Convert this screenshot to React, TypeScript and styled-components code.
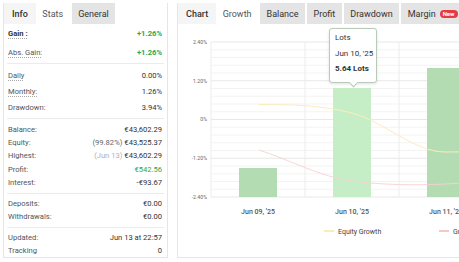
import React from "react";
import styled, { createGlobalStyle, css } from "styled-components";

const GlobalStyle = createGlobalStyle`
  html, body {
    margin: 0;
    padding: 0;
    background: #ffffff;
    overflow: hidden;
  }
  body {
    font-family: Roboto, "Liberation Sans", Arial, sans-serif;
    color: #333;
  }
`;

const Page = styled.div`
  display: flex;
  align-items: flex-start;
  gap: 9px;
  padding: 3px 0 0 3px;
  width: max-content;
`;

const Panel = styled.section<{ $width: number }>`
  width: ${(p) => p.$width}px;
  height: 255px;
  box-sizing: border-box;
  border: 1px solid #e6e6e6;
  border-top: none;
  display: flex;
  flex-direction: column;
  background: #fff;
`;

const TabBar = styled.div`
  display: flex;
  gap: 2px;
  height: 21px;
  flex: none;
  background: #fff;
`;

const Tab = styled.div<{ $kind: "label" | "active" | "idle" }>`
  display: flex;
  align-items: center;
  gap: 4px;
  padding: 0 ${(p) => (p.$kind === "label" ? 8 : 6.5)}px;
  font-size: 9px;
  color: #333;
  white-space: nowrap;
  ${(p) =>
    p.$kind === "label" &&
    css`
      background: #f5f5f5;
      font-weight: 500;
      margin-right: -2px;
    `}
  ${(p) =>
    p.$kind === "active" &&
    css`
      background: #fff;
      color: #555;
    `}
  ${(p) =>
    p.$kind === "idle" &&
    css`
      background: #e4e4e4;
    `}
`;

const NewBadge = styled.span`
  display: inline-block;
  background: #e53946;
  color: #fff;
  font-size: 6px;
  font-weight: 700;
  line-height: 8px;
  padding: 0 3px;
  border-radius: 4px;
`;

const Group = styled.div<{ $first?: boolean; $pt: number; $pb: number }>`
  padding: ${(p) => p.$pt}px 0 ${(p) => p.$pb}px;
  margin: 0 3px;
  ${(p) => !p.$first && css`border-top: 1px solid #ececec;`}
`;

const Row = styled.div<{ $h: number }>`
  height: ${(p) => p.$h}px;
  display: flex;
  align-items: center;
  justify-content: space-between;
  padding: 0 2px 0 1px;
  font-size: 7.6px;
`;

const Label = styled.span<{ $strong?: boolean; $dotted?: boolean }>`
  color: ${(p) => (p.$strong ? "#333" : "#555")};
  font-weight: ${(p) => (p.$strong ? 700 : 400)};
  ${(p) =>
    p.$dotted &&
    css`
      text-decoration: underline dotted #aaa;
      text-underline-offset: 2px;
    `}
`;

const Value = styled.span<{ $tone?: "green" | "greenBold" }>`
  color: ${(p) => (p.$tone ? "#2aa84a" : "#333")};
  font-weight: ${(p) => (p.$tone === "greenBold" ? 700 : 400)};
`;

const Note = styled.span<{ $light?: boolean }>`
  color: ${(p) => (p.$light ? "#b0b0b0" : "#666")};
  margin-right: 2px;
`;

const ChartArea = styled.div`
  position: relative;
  flex: 1;
`;

const ChartSvg = styled.svg`
  display: block;
  width: 100%;
  height: 100%;
`;

const Tooltip = styled.div`
  position: absolute;
  left: 151px;
  top: 4px;
  width: 48px;
  height: 55px;
  box-sizing: border-box;
  padding: 5px 0 0 5px;
  background: #fff;
  border: 1px solid #b8cbb8;
  border-radius: 3px;
  box-shadow: 0 1px 3px rgba(0, 0, 0, 0.12);
  font-size: 8px;
  color: #333;
  display: flex;
  flex-direction: column;
  gap: 7px;
  line-height: 8.5px;
  &::after {
    content: "";
    position: absolute;
    left: 20px;
    bottom: -4px;
    width: 6px;
    height: 6px;
    background: #fff;
    border-right: 1px solid #b8cbb8;
    border-bottom: 1px solid #b8cbb8;
    transform: rotate(45deg);
  }
`;

const TipStrong = styled.span`
  font-weight: 700;
`;

type StatRow = {
  label: string;
  value: React.ReactNode;
  strong?: boolean;
  dotted?: boolean;
  tone?: "green" | "greenBold";
};

const groups: { pt: number; pb: number; h: number; rows: StatRow[] }[] = [
  {
    pt: 0,
    pb: 1,
    h: 19,
    rows: [
      { label: "Gain :", value: "+1.26%", strong: true, dotted: true, tone: "greenBold" },
      { label: "Abs. Gain:", value: "+1.26%", dotted: true, tone: "greenBold" },
    ],
  },
  {
    pt: 3,
    pb: 3,
    h: 16,
    rows: [
      { label: "Daily", value: "0.00%", dotted: true },
      { label: "Monthly:", value: "1.26%", dotted: true },
      { label: "Drawdown:", value: "3.94%" },
    ],
  },
  {
    pt: 3.5,
    pb: 4,
    h: 13.3,
    rows: [
      { label: "Balance:", value: "€43,602.29" },
      {
        label: "Equity:",
        value: (
          <>
            <Note>(99.82%)</Note>€43,525.37
          </>
        ),
      },
      {
        label: "Highest:",
        value: (
          <>
            <Note $light>(Jun 13)</Note>€43,602.29
          </>
        ),
      },
      { label: "Profit:", value: "€542.56", tone: "green" },
      { label: "Interest:", value: "-€93.67" },
    ],
  },
  {
    pt: 3,
    pb: 4,
    h: 13,
    rows: [
      { label: "Deposits:", value: "€0.00" },
      { label: "Withdrawals:", value: "€0.00" },
    ],
  },
  {
    pt: 3,
    pb: 0,
    h: 13,
    rows: [
      { label: "Updated:", value: "Jun 13 at 22:57" },
      { label: "Tracking", value: "0" },
    ],
  },
];

const PLOT_TOP = 42;
const PLOT_BOTTOM = 197;
const PLOT_LEFT = 211;

function Chart() {
  const step = (PLOT_BOTTOM - PLOT_TOP) / 20;
  const hLines = Array.from({ length: 21 }, (_, i) => PLOT_TOP + i * step);
  const yLabels = [
    { t: "2.40%", y: PLOT_TOP },
    { t: "1.20%", y: PLOT_TOP + step * 5 },
    { t: "0%", y: PLOT_TOP + step * 10 },
    { t: "-1.20%", y: PLOT_TOP + step * 15 },
    { t: "-2.40%", y: PLOT_BOTTOM },
  ];
  const vLines = [211, 305, 399, 493];
  const bars = [
    { x: 239, top: 168, hover: false },
    { x: 333, top: 88, hover: true },
    { x: 427, top: 68, hover: false },
  ];
  const xLabels = [
    { t: "Jun 09, '25", x: 258 },
    { t: "Jun 10, '25", x: 352 },
    { t: "Jun 11, '25", x: 446 },
  ];
  return (
    <ChartSvg viewBox="178 24 298 233" preserveAspectRatio="xMinYMin meet">
      {hLines.map((y, i) => (
        <line
          key={i}
          x1={PLOT_LEFT}
          x2={520}
          y1={y}
          y2={y}
          stroke={i % 5 === 0 ? "#e8e8e8" : "#f3f3f3"}
          strokeWidth={1}
        />
      ))}
      {vLines.map((x) => (
        <line key={x} x1={x} x2={x} y1={PLOT_TOP} y2={PLOT_BOTTOM} stroke="#ececec" strokeWidth={1} />
      ))}
      {yLabels.map((l) => (
        <text
          key={l.t}
          x={207}
          y={l.y + 1.8}
          textAnchor="end"
          fontSize={5.2}
          fill="#666"
          fontFamily="Roboto, sans-serif"
        >
          {l.t}
        </text>
      ))}
      {bars.map((b) => (
        <rect
          key={b.x}
          x={b.x}
          y={b.top}
          width={38}
          height={PLOT_BOTTOM - b.top}
          fill={b.hover ? "#c6eec6" : "#b3dcb3"}
        />
      ))}
      <path
        d="M259,104.5 C290,104.5 321,105 352,113 C383,121 414,152 445,152 C476,152 507,151 538,150"
        fill="none"
        stroke="#fcecc0"
        strokeWidth={1}
      />
      <path
        d="M259,150 C290,160 321,177 352,181 C383,185 414,185.5 445,184 C476,182.5 507,180 538,178"
        fill="none"
        stroke="#f9d0d0"
        strokeWidth={0.9}
      />
      {xLabels.map((l) => (
        <text
          key={l.t}
          x={l.x}
          y={213.5}
          textAnchor="middle"
          fontSize={7}
          fontWeight={500}
          fill="#555"
          fontFamily="Roboto, sans-serif"
        >
          {l.t}
        </text>
      ))}
      <line x1={324} x2={334} y1={231} y2={231} stroke="#fbe3a0" strokeWidth={1.5} />
      <text x={338} y={233.5} fontSize={7} fill="#444" fontFamily="Roboto, sans-serif">
        Equity Growth
      </text>
      <line x1={439} x2={449} y1={231} y2={231} stroke="#f5b5b5" strokeWidth={1.5} />
      <text x={453} y={233.5} fontSize={7} fill="#444" fontFamily="Roboto, sans-serif">
        Growth
      </text>
    </ChartSvg>
  );
}

export default function App() {
  return (
    <>
      <GlobalStyle />
      <Page>
        <Panel $width={165}>
          <TabBar>
            <Tab $kind="label">Info</Tab>
            <Tab $kind="active">Stats</Tab>
            <Tab $kind="idle">General</Tab>
          </TabBar>
          {groups.map((g, gi) => (
            <Group key={gi} $first={gi === 0} $pt={g.pt} $pb={g.pb}>
              {g.rows.map((r) => (
                <Row key={r.label} $h={g.h}>
                  <Label $strong={r.strong} $dotted={r.dotted}>
                    {r.label}
                  </Label>
                  <Value $tone={r.tone}>{r.value}</Value>
                </Row>
              ))}
            </Group>
          ))}
        </Panel>
        <Panel $width={300}>
          <TabBar>
            <Tab $kind="label">Chart</Tab>
            <Tab $kind="active">Growth</Tab>
            <Tab $kind="idle">Balance</Tab>
            <Tab $kind="idle">Profit</Tab>
            <Tab $kind="idle">Drawdown</Tab>
            <Tab $kind="idle">
              Margin <NewBadge>New</NewBadge>
            </Tab>
          </TabBar>
          <ChartArea>
            <Chart />
            <Tooltip>
              <span>Lots</span>
              <span>Jun 10, '25</span>
              <TipStrong>5.64 Lots</TipStrong>
            </Tooltip>
          </ChartArea>
        </Panel>
      </Page>
    </>
  );
}
